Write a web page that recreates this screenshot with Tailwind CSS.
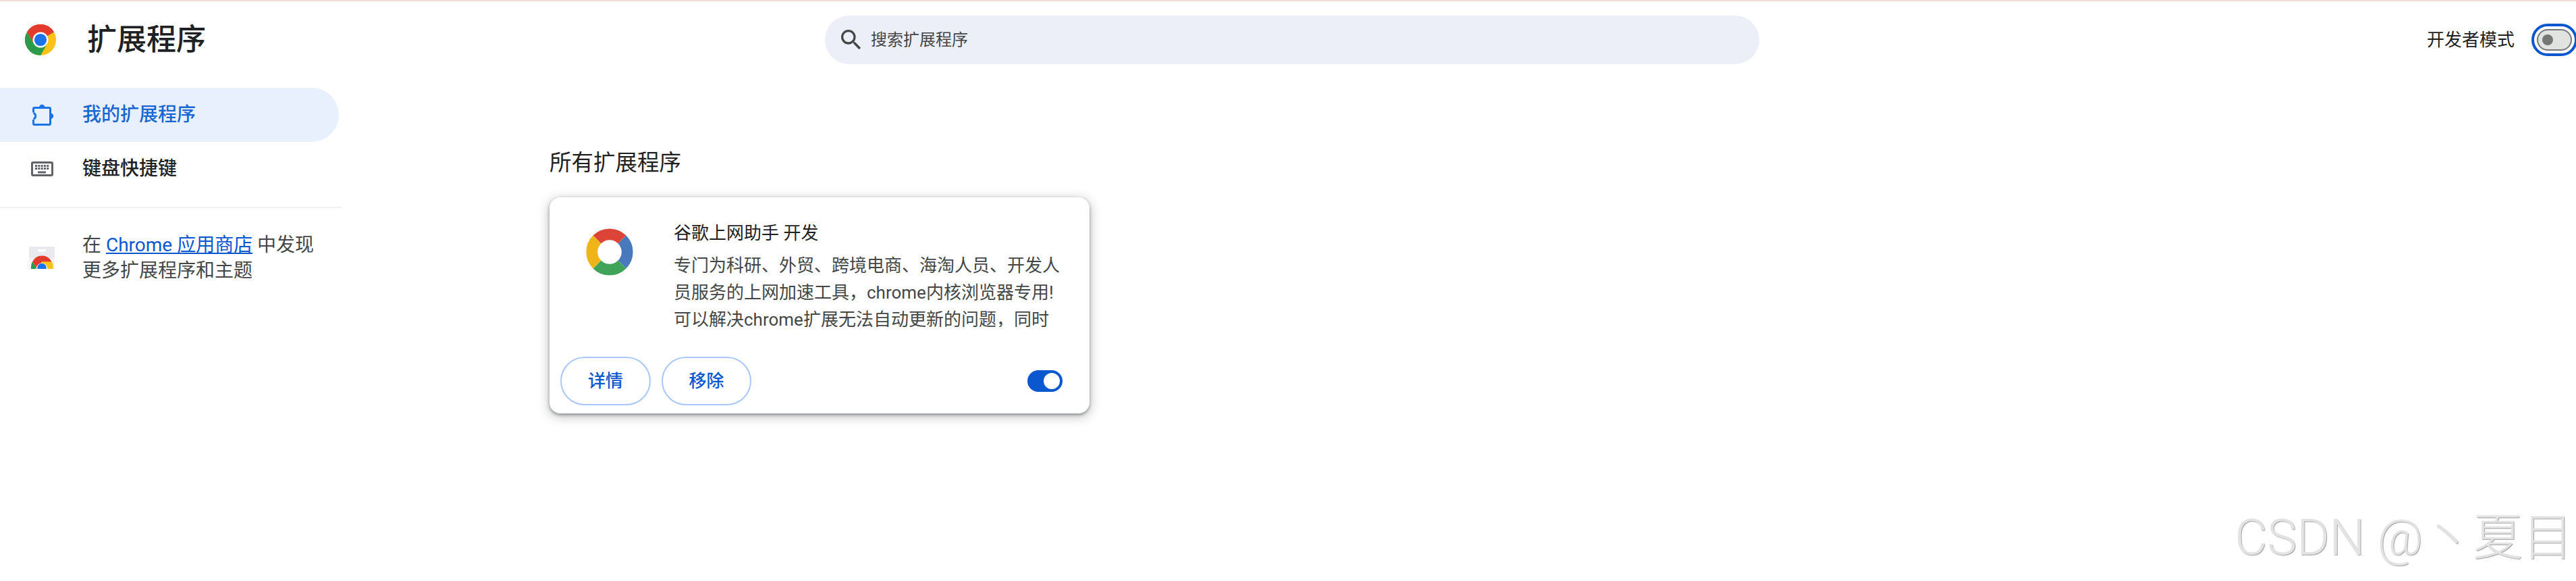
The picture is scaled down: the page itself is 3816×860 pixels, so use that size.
<!DOCTYPE html>
<html lang="zh-CN">
<head>
    <meta charset="UTF-8">
    <meta name="viewport" content="width=device-width, initial-scale=1.0">
    <title>扩展程序</title>
    <!-- Tailwind CSS -->
    <script src="https://cdn.jsdelivr.net/npm/@tailwindcss/browser@4"></script>
</head>
<body class="relative h-[860px] overflow-hidden bg-white font-['Roboto','Noto_Sans_CJK_SC',sans-serif] text-[#1f1f1f]">

    <!-- Header -->
    <header class="flex h-[116px] items-center border-t-2 border-[#f5ddd7]">
        <div class="flex w-[1222px] items-center pl-[37px]">
            <svg class="h-[46px] w-[46px] shrink-0" viewBox="0 0 48 48">
                <circle cx="24" cy="24" r="24" fill="#fbc116"/>
                <path d="M24 24 3.2 12A24 24 0 0 1 44.8 12Z" fill="#e33b2e"/>
                <path d="M24 12H44.8A24 24 0 0 0 3.2 12L13.6 30Z" fill="#e33b2e"/>
                <path d="M13.6 30 3.2 12A24 24 0 0 0 24 48L34.4 30Z" fill="#2a9a4b"/>
                <circle cx="24" cy="24" r="12" fill="#fff"/>
                <circle cx="24" cy="24" r="9.5" fill="#1a73e8"/>
            </svg>
            <h1 class="ml-[46px] text-[44px] leading-[60px] font-medium text-[#202124]">扩展程序</h1>
        </div>
        <div class="flex h-[72px] w-[1384px] items-center rounded-full bg-[#eceef8] pl-[19px] text-[#444746]">
            <svg class="h-10 w-10" viewBox="0 0 24 24" fill="currentColor">
                <path d="M15.5 14h-.79l-.28-.27A6.47 6.47 0 0 0 16 9.5 6.5 6.5 0 1 0 9.5 16c1.61 0 3.09-.59 4.23-1.57l.27.28v.79l5 4.99L20.49 19l-4.99-5zm-6 0C7.01 14 5 11.99 5 9.5S7.01 5 9.5 5 14 7.01 14 9.5 11.99 14 9.5 14z"/>
            </svg>
            <span class="ml-[9px] text-2xl">搜索扩展程序</span>
        </div>
        <div class="ml-auto flex items-center">
            <span class="mr-[25px] text-[26px] leading-10">开发者模式</span>
            <div class="-mr-0.5 flex h-12 w-[68px] items-center justify-center rounded-full border-4 border-[#0b57d0]">
                <div class="flex h-8 w-[52px] items-center rounded-full border-2 border-[#747775] bg-[#e1e3e1] pl-1.5">
                    <div class="h-4 w-4 rounded-full bg-[#747775]"></div>
                </div>
            </div>
        </div>
    </header>

    <div class="flex">
        <!-- Sidebar -->
        <aside class="w-[506px] pt-[14px]">
            <nav class="text-[28px] font-medium">
                <a class="flex h-20 w-[502px] items-center rounded-r-full bg-[#e8f0fe] pl-11 text-[#1967d2]">
                    <svg class="h-10 w-10" viewBox="0 0 40 40">
                        <rect x="5.5" y="9.5" width="25" height="25" rx="1.5" fill="none" stroke="#1a73e8" stroke-width="3"/>
                        <path d="M14 9a4.2 4.2 0 0 1 8.400 0ZM31 17.500a4.200 4.200 0 0 1 0 8.400Z" fill="#1a73e8"/>
                        <path d="M3 16.500h4.200v10.500H3Z" fill="#e8f0fe"/>
                        <path d="M4 17.200a4.800 4.800 0 0 1 0 9" transform="translate(1.500 0)" fill="none" stroke="#1a73e8" stroke-width="3"/>
                    </svg>
                    <span class="ml-[38px]">我的扩展程序</span>
                </a>
                <a class="flex h-20 items-center pl-[42px] text-[#202124]">
                    <svg class="h-10 w-10" viewBox="0 0 40 40">
                        <rect x="5.500" y="10.500" width="30" height="19" rx="1.500" fill="none" stroke="#5f6368" stroke-width="3"/>
                        <path d="M10 15.500h21M10 19.500h21" stroke="#5f6368" stroke-width="3" stroke-dasharray="3 1.300"/>
                        <path d="M14 25h12" stroke="#5f6368" stroke-width="3"/>
                    </svg>
                    <span class="ml-10">键盘快捷键</span>
                </a>
            </nav>
            <div class="mt-4 border-t-2 border-[#f1f1f1]"></div>
            <div class="flex items-start pt-9 pl-[43px] text-[#444746]">
                <svg class="mt-[21px] h-[33px] w-[38px] shrink-0" viewBox="0 0 38 33">
                    <path d="M0 0h38v33H0Z" fill="#f1f3f4"/>
                    <path d="M0 0h38v17H0Z" fill="#e8eaed"/>
                    <rect x="13" y="4" width="12" height="3.400" rx="1.700" fill="#fff"/>
                    <path d="M3 33V30A16 16 0 0 1 5 22.300L12 33Z" fill="#2a9a4b"/>
                    <path d="M19 22H33.500A16 16 0 0 1 35.500 33H19Z" fill="#fbc116"/>
                    <path d="M5 22.300A16 16 0 0 1 33.500 22.300H19L12 33Z" fill="#e33b2e"/>
                    <path d="M10.500 33A8.500 8.500 0 1 1 27.500 33Z" fill="#fff"/>
                    <path d="M12.500 33A6.700 6.700 0 1 1 25.500 33Z" fill="#1a73e8"/>
                </svg>
                <p class="ml-[41px] text-[28px] leading-[38px] whitespace-nowrap">在 <a class="text-[#0b57d0] underline decoration-2 underline-offset-2">Chrome 应用商店</a> 中发现<br>更多扩展程序和主题</p>
            </div>
        </aside>

        <!-- Extension list -->
        <main class="pt-[101px] pl-[308px]">
            <h2 class="text-[32.5px] leading-[48px]">所有扩展程序</h2>
            <div class="mt-[27px] flex h-80 w-[800px] flex-col rounded-2xl bg-white shadow-[0_2px_4px_rgba(60,64,67,0.5),0_4px_16px_2px_rgba(60,64,67,0.28)]">
                <div class="flex pt-[33px] pl-[54px]">
                    <svg class="mt-[13px] h-[70px] w-[70px] shrink-0" viewBox="-35 -35 70 70" fill="none" stroke-width="16.800">
                        <path d="M-18.530-18.530A26.200 26.200 0 0 1 18.530-18.530" stroke="#db4437"/>
                        <path d="M18.530-18.530A26.200 26.200 0 0 1 18.530 18.530" stroke="#4779bc"/>
                        <path d="M18.530 18.530A26.200 26.200 0 0 1-18.530 18.530" stroke="#3fa35a"/>
                        <path d="M-18.530 18.530A26.200 26.200 0 0 1-18.530-18.530" stroke="#efb518"/>
                    </svg>
                    <div class="ml-[60px] text-[26px] leading-10 whitespace-nowrap">
                        <h3>谷歌上网助手 开发</h3>
                        <p class="mt-2 h-[111px] overflow-hidden text-[#444746]">专门为科研、外贸、跨境电商、海淘人员、开发人<br>员服务的上网加速工具，chrome内核浏览器专用!<br>可以解决chrome扩展无法自动更新的问题，同时</p>
                    </div>
                </div>
                <div class="mt-auto flex items-center pr-10 pb-3 pl-4 text-[26px] font-medium text-[#0b57d0]">
                    <button class="h-[72px] w-[134px] rounded-full border-2 border-[#a8c7fa]">详情</button>
                    <button class="ml-4 h-[72px] w-[133px] rounded-full border-2 border-[#a8c7fa]">移除</button>
                    <div class="ml-auto flex h-8 w-[52px] items-center justify-end rounded-full bg-[#0b57d0] pr-1">
                        <div class="h-6 w-6 rounded-full bg-white"></div>
                    </div>
                </div>
            </div>
        </main>
    </div>

    <!-- Watermark -->
    <div class="absolute right-[5px] bottom-[14px] text-[74px] leading-[100px] font-light whitespace-nowrap text-[#e3e3e3] [text-shadow:1px_1px_1px_#a0a0a0]">CSDN @丶夏目</div>

</body>
</html>
